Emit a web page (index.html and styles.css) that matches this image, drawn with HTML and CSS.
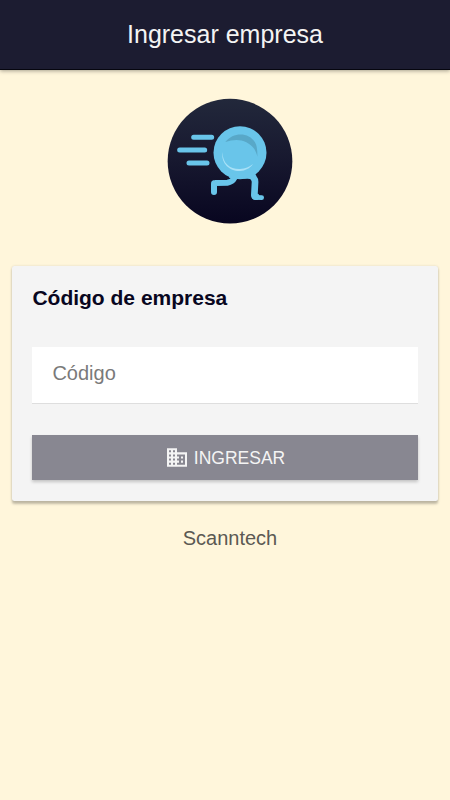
FILE: index.html
```html
<!DOCTYPE html>
<html lang="es">
<head>
<meta charset="utf-8">
<title>Ingresar empresa</title>
<link rel="stylesheet" href="styles.css">
</head>
<body>
<header class="toolbar"><h1 class="toolbar-title">Ingresar empresa</h1></header>
<main class="content">
  <svg class="logo" viewBox="0 0 420 420" aria-hidden="true">
    <defs>
      <linearGradient id="night" x1="0" y1="0" x2="0" y2="1">
        <stop offset="0" stop-color="#22283b"/>
        <stop offset=".5" stop-color="#17182f"/>
        <stop offset="1" stop-color="#080620"/>
      </linearGradient>
    </defs>
    <circle cx="210" cy="213.500" r="187" fill="url(#night)"/>
    <g fill="none" stroke="#69c5ea" stroke-linecap="round" stroke-linejoin="round">
      <path stroke-width="15" d="M101 142H155M59 180H134M87 219H141"/>
      <path stroke-width="18" d="M162 306V281Q162 279 165 279L202 278Q217 276 223 264L228 250"/>
      <path stroke-width="20" d="M273 250L281 264Q286 270 285 279L283 316Q283 320 288 320"/>
      <path stroke-width="14" d="M284 322L305 323"/>
    </g>
    <circle cx="240" cy="188" r="79.500" fill="#69c5ea"/>
    <path d="M211 248H270L291 273L275 268Q254 263 230 267L207 263Z" fill="#69c5ea"/>
    <path d="M196 156C220 125 267 127 285 157Q293 171 292 200C288 180 277 166 259 157C239 146 217 149 196 156Z" fill="#58a8c8"/>
    <path d="M187 186C188 222 211 238 240 237C257 236 267 231 279 222C269 236 256 242 240 243C210 244 183 222 187 186Z" fill="#a9e1f7"/>
  </svg>
  <section class="card">
    <h2 class="card-title">Código de empresa</h2>
    <input class="code-input" type="text" placeholder="Código" aria-label="Código">
    <button class="submit" type="button">
      <svg class="building" viewBox="0 0 24 24" aria-hidden="true"><path fill="currentColor" d="M12 7V3H2v18h20V7H12zM6 19H4v-2h2v2zm0-4H4v-2h2v2zm0-4H4V9h2v2zm0-4H4V5h2v2zm4 12H8v-2h2v2zm0-4H8v-2h2v2zm0-4H8V9h2v2zm0-4H8V5h2v2zm10 12h-8v-2h2v-2h-2v-2h2v-2h-2V9h8v10zm-2-8h-2v2h2v-2zm0 4h-2v2h2v-2z"/></svg>
      <span class="submit-label">INGRESAR</span>
    </button>
  </section>
  <footer class="brand">Scanntech</footer>
</main>
</body>
</html>
```
FILE: styles.css
```css
* { box-sizing: border-box; }
body {
  margin: 0;
  min-height: 100vh;
  background: #fff6db;
  font-family: "Liberation Sans", Arial, sans-serif;
}
.toolbar {
  height: 70px;
  padding-bottom: 2px;
  display: flex;
  align-items: center;
  justify-content: center;
  background: #1c1c31;
  border-bottom: 1px solid #06060f;
  box-shadow: 0 1px 4px rgba(0, 0, 0, .35);
}
.toolbar-title {
  margin: 0;
  font-size: 25px;
  line-height: 30px;
  font-weight: 400;
  color: #f4f4f4;
}
.content {
  display: flex;
  flex-direction: column;
  padding: 20px 12.400px;
}
.logo {
  width: 140px;
  height: 140px;
  margin-left: 147.600px;
}
.card {
  height: 235px;
  margin-top: 36px;
  padding: 20px;
  display: flex;
  flex-direction: column;
  background: #f4f4f4;
  border-radius: 2.500px;
  box-shadow: 0 2.500px 2.500px rgba(0, 0, 0, .24), 0 0 2.500px rgba(0, 0, 0, .12);
}
.card-title {
  margin: 0;
  font-size: 21px;
  line-height: 24px;
  font-weight: 700;
  color: #080620;
}
.code-input {
  height: 57px;
  margin: 37px 0 31px;
  padding: 0 20px 4px;
  border: 0;
  border-bottom: 1px solid #dedede;
  border-radius: 0;
  background: #fff;
  font: 20px "Liberation Sans", Arial, sans-serif;
}
.code-input::placeholder { color: #7a7a7a; }
.submit {
  height: 45px;
  padding: 0;
  display: flex;
  align-items: center;
  justify-content: center;
  gap: 5px;
  border: 0;
  background: #888791;
  color: #f4f4f4;
  box-shadow: 0 2px 3px rgba(0, 0, 0, .2);
  font: 17.500px "Liberation Sans", Arial, sans-serif;
}
.submit-label { padding-top: 2px; }
.building { width: 24px; height: 25px; margin-bottom: 1px; }
.building path { transform: scaleY(1.04); transform-origin: center; }
.brand {
  margin: 25px 0 0 10px;
  text-align: center;
  font-size: 20px;
  line-height: 24px;
  color: #5b5953;
}
```
